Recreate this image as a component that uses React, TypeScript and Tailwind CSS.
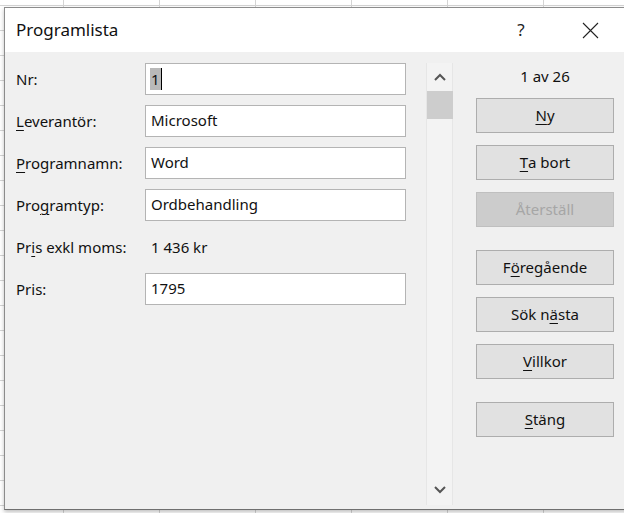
import React from "react";

const font = { fontFamily: '"Noto Sans", "Segoe UI", sans-serif' };

function U({ children }: { children: React.ReactNode }) {
  return <span className="underline underline-offset-[3px] decoration-1">{children}</span>;
}

function Btn({ children, disabled }: { children: React.ReactNode; disabled?: boolean }) {
  return (
    <div
      className={
        "h-[35px] w-[138px] flex items-center justify-center border text-[15px] " +
        (disabled
          ? "bg-[#cccccc] border-[#bfbfbf] text-[#a6a6a6]"
          : "bg-[#e1e1e1] border-[#adadad] text-[#111]")
      }
    >
      {children}
    </div>
  );
}

function Field({ children }: { children?: React.ReactNode }) {
  return (
    <div className="h-[32px] w-[261px] bg-white border border-[#b4b4b4] flex items-center pl-[5px] pb-[2px] text-[15px] text-[#111]">
      {children}
    </div>
  );
}

function Label({ children }: { children: React.ReactNode }) {
  return <div className="h-[32px] flex items-center text-[15px] text-[#111]">{children}</div>;
}

export default function App() {
  return (
    <div
      className="relative w-[624px] h-[513px] overflow-hidden bg-white bg-[linear-gradient(to_right,#d4d4d4_1px,transparent_1px),linear-gradient(to_bottom,#d4d4d4_1px,transparent_1px)] bg-[size:96px_25px] bg-[position:63px_5px]"
      style={font}
    >
      <div className="absolute left-[4px] top-[7px] w-[660px] h-[503px] border border-[#8c8c8c] border-b-[#6f6f6f] bg-[#f0f0f0] flex flex-col shadow-[0_2px_4px_rgba(0,0,0,0.25)]">
        {/* Title bar */}
        <div className="h-[44px] bg-white flex items-center shrink-0">
          <div className="pl-[11px] text-[17px] text-[#111] w-[502px]">Programlista</div>
          <div className="w-[28px] text-center text-[17px] text-[#222]">?</div>
          <div className="ml-[46px] w-[18px] h-[18px] flex items-center justify-center">
            <svg width="17" height="17" viewBox="0 0 17 17">
              <path d="M1 1 L16 16 M16 1 L1 16" stroke="#222" strokeWidth="1.1" fill="none" />
            </svg>
          </div>
        </div>

        {/* Body */}
        <div className="flex flex-1">
          {/* Form */}
          <div className="pl-[11px] pt-[11px] grid grid-cols-[129px_261px] gap-y-[10px] content-start">
            <Label>Nr:</Label>
            <div className="h-[32px] w-[261px] bg-white border border-[#b4b4b4] flex items-center pl-[4px] text-[15px] text-[#111]">
              <span className="bg-[#b9b9b9] px-[1px] leading-[22px]">1</span>
              <span className="w-[1px] h-[22px] bg-black" />
            </div>

            <Label>
              <U>L</U>everantör:
            </Label>
            <Field>Microsoft</Field>

            <Label>
              <U>P</U>rogramnamn:
            </Label>
            <Field>Word</Field>

            <Label>
              Pro<U>g</U>ramtyp:
            </Label>
            <Field>Ordbehandling</Field>

            <Label>
              Pr<U>i</U>s exkl moms:
            </Label>
            <div className="h-[32px] flex items-center pl-[6px] text-[15px] text-[#111]">1 436 kr</div>

            <Label>Pris:</Label>
            <Field>1795</Field>
          </div>

          {/* Scrollbar */}
          <div className="ml-[20px] mt-[11px] mb-[4px] w-[27px] border-x border-[#e6e6e6] bg-[#f3f3f3] flex flex-col items-center">
            <div className="h-[28px] flex items-center justify-center">
              <svg width="12" height="8" viewBox="0 0 12 8">
                <path d="M1 7 L6 2 L11 7" stroke="#555" strokeWidth="2" fill="none" />
              </svg>
            </div>
            <div className="w-[26px] h-[28px] bg-[#cdcdcd]" />
            <div className="flex-1" />
            <div className="h-[30px] flex items-center justify-center">
              <svg width="12" height="8" viewBox="0 0 12 8">
                <path d="M1 1 L6 6 L11 1" stroke="#555" strokeWidth="2" fill="none" />
              </svg>
            </div>
          </div>

          {/* Right panel */}
          <div className="ml-[23px] pt-[13px] flex flex-col w-[138px]">
            <div className="h-[22px] flex items-center justify-center text-[15px] text-[#111]">1 av 26</div>
            <div className="mt-[11px] flex flex-col gap-[12px]">
              <Btn>
                <U>N</U>y
              </Btn>
              <Btn>
                <U>T</U>a bort
              </Btn>
              <Btn disabled>Återställ</Btn>
            </div>
            <div className="mt-[23px] flex flex-col gap-[12px]">
              <Btn>
                F<U>ö</U>regående
              </Btn>
              <Btn>
                Sök n<U>ä</U>sta
              </Btn>
              <Btn>
                <U>V</U>illkor
              </Btn>
            </div>
            <div className="mt-[23px]">
              <Btn>
                <U>S</U>täng
              </Btn>
            </div>
          </div>
        </div>
      </div>
    </div>
  );
}
